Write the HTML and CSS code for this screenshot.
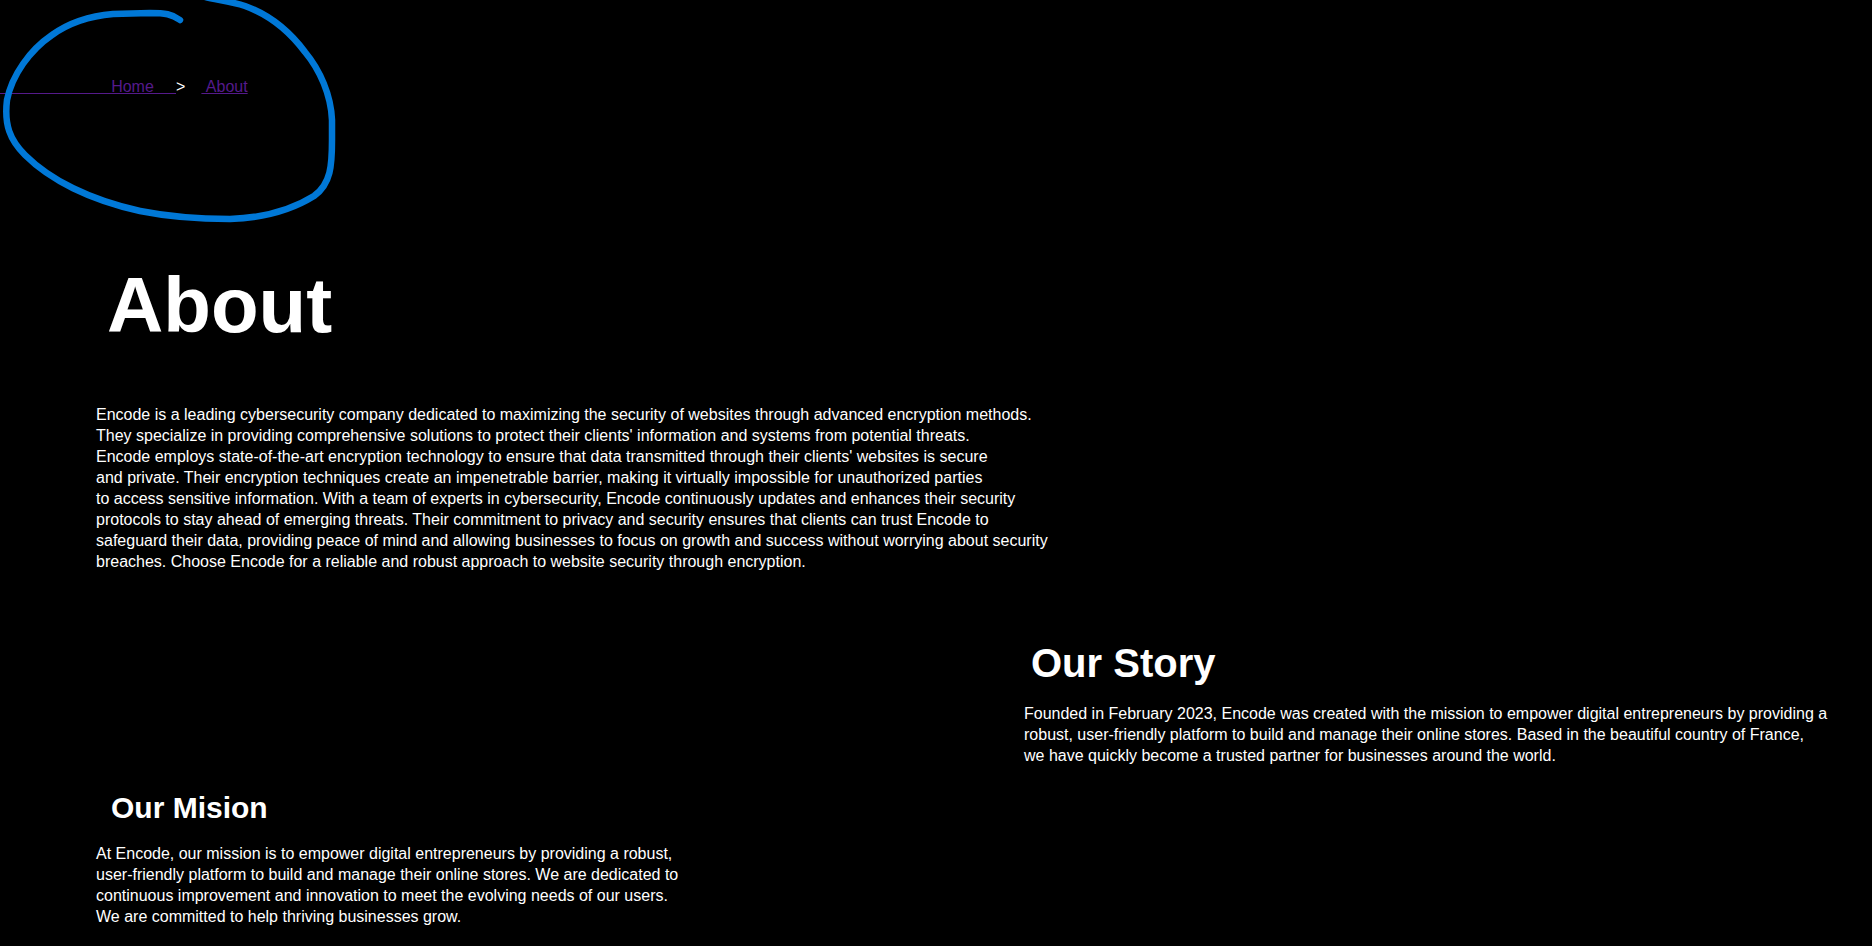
FILE: index.html
```html
<!DOCTYPE html>
<html lang="en">
<head>
<meta charset="utf-8">
<title>About - Encode</title>
<link rel="stylesheet" href="styles.css">
</head>
<body>
<nav class="crumbs">
  <a class="crumb-link" href="#">&nbsp;&nbsp;&nbsp;&nbsp;&nbsp;&nbsp;&nbsp;&nbsp;&nbsp;&nbsp;&nbsp;&nbsp;&nbsp;&nbsp;&nbsp;&nbsp;&nbsp;&nbsp;&nbsp;&nbsp;&nbsp;&nbsp;&nbsp;&nbsp;&nbsp;Home&nbsp;&nbsp;&nbsp;&nbsp;&nbsp;</a><span class="crumb-sep">&gt;</span><a class="crumb-link crumb-current" href="#">&nbsp;About</a>
</nav>

<svg class="annotation" width="345" height="226" viewBox="0 0 345 226" aria-hidden="true">
  <path d="M180 20 C172 14 165 13 150 13 L113 14 C90 16 70 22 52 35 C30 50 12 75 7 100 C4 125 10 140 25 155 C50 180 90 200 140 211 C170 217 200 219 230 219 C260 218 290 211 314 196 C331 184 332 165 332 140 L332 120 C331 95 320 70 305 52 C290 32 270 15 245 6 C230 1 215 0 205 -3" fill="none" stroke="#0078d7" stroke-width="6.5" stroke-linecap="round" stroke-linejoin="round"/>
</svg>

<main class="page">
  <h1 class="page-title">About</h1>
  <p class="intro">Encode is a leading cybersecurity company dedicated to maximizing the security of websites through advanced encryption methods.<br>They specialize in providing comprehensive solutions to protect their clients' information and systems from potential threats.<br>Encode employs state-of-the-art encryption technology to ensure that data transmitted through their clients' websites is secure<br>and private. Their encryption techniques create an impenetrable barrier, making it virtually impossible for unauthorized parties<br>to access sensitive information. With a team of experts in cybersecurity, Encode continuously updates and enhances their security<br>protocols to stay ahead of emerging threats. Their commitment to privacy and security ensures that clients can trust Encode to<br>safeguard their data, providing peace of mind and allowing businesses to focus on growth and success without worrying about security<br>breaches. Choose Encode for a reliable and robust approach to website security through encryption.</p>

  <div class="sections">
    <section class="story">
      <h2 class="story-title">Our Story</h2>
      <p class="text">Founded in February 2023, Encode was created with the mission to empower digital entrepreneurs by providing a<br>robust, user-friendly platform to build and manage their online stores. Based in the beautiful country of France,<br>we have quickly become a trusted partner for businesses around the world.</p>
    </section>
    <section class="mission">
      <h2 class="mission-title">Our Mision</h2>
      <p class="text">At Encode, our mission is to empower digital entrepreneurs by providing a robust,<br>user-friendly platform to build and manage their online stores. We are dedicated to<br>continuous improvement and innovation to meet the evolving needs of our users.<br>We are committed to help thriving businesses grow.</p>
    </section>
  </div>
</main>
</body>
</html>
```

FILE: styles.css
```css
html, body {
  background: #000;
}

body {
  margin: 0;
  color: #fff;
  font-family: "Liberation Sans", Arial, sans-serif;
  font-size: 16px;
  position: relative;
  overflow: hidden;
}

.crumbs {
  padding-top: 77px;
  line-height: 20px;
  white-space: nowrap;
}

.crumb-link {
  color: #551a8b;
  text-decoration: underline;
}

.crumb-sep {
  color: #fff;
}

.crumb-current {
  margin-left: 16px;
}

.annotation {
  position: absolute;
  left: 0;
  top: 0;
  pointer-events: none;
}

.page {
  padding-left: 96px;
}

.page-title {
  margin: 163px 0 0;
  padding-left: 11px;
  font-size: 78px;
  line-height: 90px;
  font-weight: bold;
}

.intro {
  margin: 54px 0 0;
  line-height: 21px;
  white-space: nowrap;
}

.text {
  margin: 0;
  line-height: 21px;
  white-space: nowrap;
}

.sections {
  display: grid;
  grid-template-columns: 928px 1fr;
  row-gap: 24px;
  margin-top: 68px;
}

.story {
  grid-column: 2;
  grid-row: 1;
}

.mission {
  grid-column: 1;
  grid-row: 2;
}

.story-title {
  margin: 0 0 17px;
  padding-left: 7px;
  font-size: 40px;
  line-height: 46px;
  font-weight: bold;
}

.mission-title {
  margin: 0 0 17px;
  padding-left: 15px;
  font-size: 30px;
  line-height: 36px;
  font-weight: bold;
}
```
